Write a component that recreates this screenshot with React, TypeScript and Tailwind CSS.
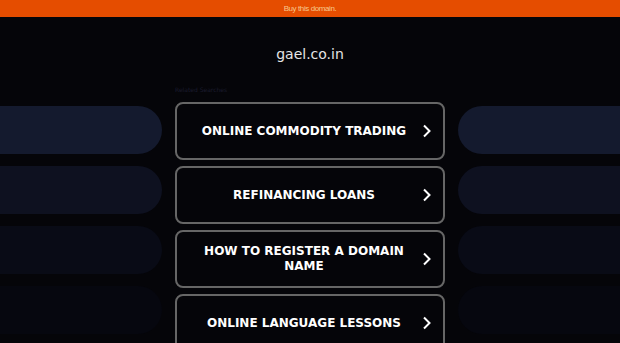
const searches = [
  'Online Commodity Trading',
  'Refinancing Loans',
  'How to Register a Domain Name',
  'Online Language Lessons',
];

const pillColors = ['bg-[#141a2e]', 'bg-[#0e1120]', 'bg-[#090b16]', 'bg-[#06070f]'];

function Chevron() {
  return (
    <svg width="10" height="14" viewBox="0 0 10 14" className="shrink-0">
      <polyline points="2,1.5 7.5,7 2,12.5" fill="none" stroke="#ffffff" strokeWidth="2" />
    </svg>
  );
}

function Pills({ side }: { side: 'left' | 'right' }) {
  return (
    <div className="flex-1 flex flex-col gap-[12px] pt-[4px]">
      {pillColors.map((c) => (
        <div
          key={c}
          className={`h-[48px] ${c} ${side === 'left' ? 'rounded-r-[24px]' : 'rounded-l-[24px]'}`}
        />
      ))}
    </div>
  );
}

export default function App() {
  return (
    <div className="w-[620px] h-[343px] overflow-hidden bg-[#050509] font-['DejaVu_Sans',sans-serif]">
      <div className="h-[17px] bg-[#e54d00] flex items-center justify-center">
        <span className="text-[8px] tracking-[-0.4px] text-[#f8c88e] font-['Liberation_Sans',sans-serif]">
          Buy this domain.
        </span>
      </div>

      <div className="h-[68px] pt-[28px] text-center text-[14px] leading-[18px] text-[#e6e6e6]">
        gael.co.in
      </div>

      <div className="w-[270px] mx-auto h-[17px] pl-[-1px] text-[6px] leading-[10px] text-[#1b1c2e]">
        Related Searches
      </div>

      <div className="flex gap-[13px]">
        <Pills side="left" />
        <div className="w-[270px] shrink-0 flex flex-col gap-[6px]">
          {searches.map((s) => (
            <div
              key={s}
              className="h-[58px] border-2 border-[#666666] rounded-[8px] flex items-center pl-[9px] pr-[11px]"
            >
              <span className="flex-1 text-center uppercase font-bold text-[12px] leading-[15px] text-white">
                {s}
              </span>
              <Chevron />
            </div>
          ))}
        </div>
        <Pills side="right" />
      </div>
    </div>
  );
}
